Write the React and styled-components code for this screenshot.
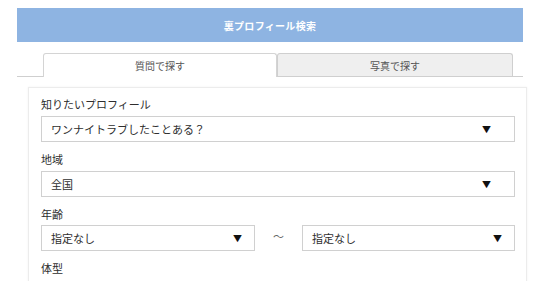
import React from "react";
import styled, { createGlobalStyle } from "styled-components";

const Global = createGlobalStyle`
  html, body { margin: 0; padding: 0; background: #fff; }
  body { font-family: "Noto Sans CJK JP", "Noto Sans", sans-serif; color: #333; }
`;

const Page = styled.div`
  width: 540px;
  height: 281px;
  overflow: hidden;
  padding-top: 8px;
  box-sizing: border-box;
`;

const Header = styled.div`
  margin-left: 17px;
  width: 506px;
  height: 34px;
  background: #8eb4e2;
  color: #fff;
  font-size: 10px;
  font-weight: 700;
  display: flex;
  align-items: center;
  justify-content: center;
  letter-spacing: 0.3px;
`;

const Tabs = styled.div`
  margin: 11px 0 0 17px;
  width: 506px;
  padding-left: 26px;
  box-sizing: border-box;
  display: flex;
  border-bottom: 1px solid #cfcfcf;
`;

const Tab = styled.div`
  width: ${(p) => p.$w}px;
  box-sizing: border-box;
  border: 1px solid ${(p) => (p.$active ? "#d4d4d4" : "#cfcfcf")};
  border-bottom: none;
  border-radius: 3px 3px 0 0;
  background: ${(p) => (p.$active ? "#fff" : "#efefef")};
  margin-bottom: ${(p) => (p.$active ? "-1px" : "0")};
  height: ${(p) => (p.$active ? "24px" : "23px")};
  display: flex;
  align-items: center;
  justify-content: center;
  font-size: 10px;
  color: #555;
`;

const Card = styled.div`
  margin: 10px 0 0 28px;
  width: 499px;
  box-sizing: border-box;
  border: 1px solid #ececec;
  box-shadow: 0 0 2px rgba(0, 0, 0, 0.06);
  padding: 10px 11px 20px 12px;
  display: flex;
  flex-direction: column;
`;

const Label = styled.div`
  font-size: 11px;
  line-height: 13px;
  color: #2e2e2e;
  margin-top: ${(p) => (p.$first ? "0" : "11px")};
  margin-bottom: ${(p) => (p.$tight ? "4px" : "5px")};
`;

const SelectBox = styled.div`
  width: ${(p) => p.$w}px;
  height: 26px;
  box-sizing: border-box;
  border: 1px solid #d0d0d0;
  display: flex;
  align-items: center;
  justify-content: space-between;
  padding: 0 ${(p) => p.$pr}px 0 9px;
  font-size: 11px;
  color: #2e2e2e;
  background: #fff;
`;

const Arrow = styled.span`
  font-size: 9px;
  color: #111;
`;

const Row = styled.div`
  display: flex;
  align-items: center;
`;

const Tilde = styled.span`
  width: 47px;
  text-align: center;
  font-size: 11px;
  color: #666;
  padding-bottom: 4px;
`;

function Select({ w, value, pr = 23 }) {
  return (
    <SelectBox $w={w} $pr={pr}>
      <span>{value}</span>
      <Arrow>▼</Arrow>
    </SelectBox>
  );
}

export default function App() {
  return (
    <>
      <Global />
      <Page>
        <Header>裏プロフィール検索</Header>
        <Tabs>
          <Tab $active $w={234}>質問で探す</Tab>
          <Tab $w={236}>写真で探す</Tab>
        </Tabs>
        <Card>
          <Label $first>知りたいプロフィール</Label>
          <Select w={474} value="ワンナイトラブしたことある？" />
          <Label>地域</Label>
          <Select w={474} value="全国" />
          <Label $tight>年齢</Label>
          <Row>
            <Select w={214} pr={12} value="指定なし" />
            <Tilde>〜</Tilde>
            <Select w={213} pr={12} value="指定なし" />
          </Row>
          <Label>体型</Label>
        </Card>
      </Page>
    </>
  );
}
